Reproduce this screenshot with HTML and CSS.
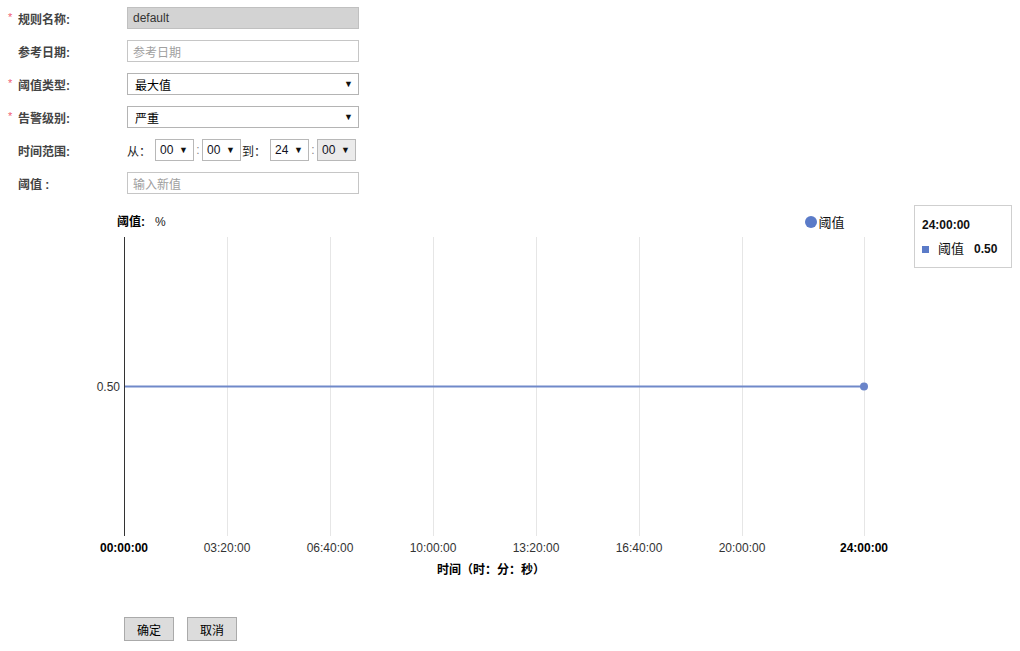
FILE: index.html
```html
<!DOCTYPE html>
<html lang="zh">
<head>
<meta charset="utf-8">
<title>规则</title>
<link rel="stylesheet" href="styles.css">
</head>
<body>
<form class="form">
  <div class="row">
    <label class="label"><span class="req">*</span>规则名称:</label>
    <div class="input disabled">default</div>
  </div>
  <div class="row">
    <label class="label"><span class="req"></span>参考日期:</label>
    <div class="input placeholder">参考日期</div>
  </div>
  <div class="row">
    <label class="label"><span class="req">*</span>阈值类型:</label>
    <div class="select"><span>最大值</span><span class="arrow">▼</span></div>
  </div>
  <div class="row">
    <label class="label"><span class="req">*</span>告警级别:</label>
    <div class="select"><span>严重</span><span class="arrow">▼</span></div>
  </div>
  <div class="row">
    <label class="label"><span class="req"></span>时间范围:</label>
    <div class="time">
      <span class="tword">从：</span>
      <div class="tsel"><span>00</span><span class="arrow">▼</span></div>
      <span class="tcolon">:</span>
      <div class="tsel"><span>00</span><span class="arrow">▼</span></div>
      <span class="tword to">到：</span>
      <div class="tsel"><span>24</span><span class="arrow">▼</span></div>
      <span class="tcolon">:</span>
      <div class="tsel off"><span>00</span><span class="arrow">▼</span></div>
    </div>
  </div>
  <div class="row">
    <label class="label"><span class="req"></span>阈值 :</label>
    <div class="input placeholder">输入新值</div>
  </div>
</form>

<div class="chart">
  <svg class="plot" width="900" height="400" viewBox="0 0 900 400">
    <text x="117" y="32" class="ytitle"><tspan class="b">阈值:</tspan><tspan x="155">%</tspan></text>
    <circle cx="811" cy="28" r="6" fill="#5b7bc8"/>
    <text x="818.5" y="32.5" class="legend">阈值</text>
    <g stroke="#e6e6e6" stroke-width="1">
      <line x1="227.5" y1="43" x2="227.5" y2="342"/>
      <line x1="330.5" y1="43" x2="330.5" y2="342"/>
      <line x1="433.5" y1="43" x2="433.5" y2="342"/>
      <line x1="536.5" y1="43" x2="536.5" y2="342"/>
      <line x1="639.5" y1="43" x2="639.5" y2="342"/>
      <line x1="742.5" y1="43" x2="742.5" y2="342"/>
      <line x1="864.5" y1="43" x2="864.5" y2="342"/>
    </g>
    <line x1="124.5" y1="43" x2="124.5" y2="342" stroke="#333" stroke-width="1"/>
    <text x="120" y="196.5" class="ylab">0.50</text>
    <line x1="125" y1="192.5" x2="864" y2="192.5" stroke="#7089c9" stroke-width="2"/>
    <circle cx="864" cy="192.5" r="4" fill="#6a84c9"/>
    <g class="xlab">
      <text x="124" y="358" class="b">00:00:00</text>
      <text x="227" y="358">03:20:00</text>
      <text x="330" y="358">06:40:00</text>
      <text x="433" y="358">10:00:00</text>
      <text x="536" y="358">13:20:00</text>
      <text x="639" y="358">16:40:00</text>
      <text x="742" y="358">20:00:00</text>
      <text x="864" y="358" class="b">24:00:00</text>
    </g>
    <text x="491" y="380" class="xtitle">时间（时：分：秒）</text>
  </svg>
  <div class="tip">
    <div class="tip-time">24:00:00</div>
    <div class="tip-row"><span class="sq"></span><span class="tip-name">阈值</span><span class="tip-val">0.50</span></div>
  </div>
</div>

<div class="buttons">
  <button type="button" class="btn">确定</button>
  <button type="button" class="btn">取消</button>
</div>
</body>
</html>
```

FILE: styles.css
```css
html, body {
  margin: 0;
  padding: 0;
  background: #fff;
}
body {
  font-family: "Liberation Sans", Arial, "Noto Sans CJK SC", sans-serif;
  font-size: 12px;
  color: #333;
  width: 1020px;
}
.form {
  padding-top: 7px;
}
.row {
  display: flex;
  align-items: center;
  height: 22px;
  margin-bottom: 11px;
}
.row:last-child {
  margin-bottom: 0;
}
.label {
  display: flex;
  align-items: center;
  width: 127px;
  padding-left: 8px;
  box-sizing: border-box;
  font-weight: bold;
  color: #444;
}
.req {
  display: inline-block;
  width: 10px;
  color: #ef5d73;
  font-weight: normal;
  font-size: 11px;
  position: relative;
  top: -1px;
}
.input, .select {
  box-sizing: border-box;
  width: 232px;
  height: 22px;
  border: 1px solid #c6c6c6;
  background: #fff;
  display: flex;
  align-items: center;
  padding-left: 5px;
  color: #333;
}
.input.disabled {
  background: #d3d3d3;
  border-color: #c0c0c0;
}
.input.placeholder {
  color: #a0a0a0;
}
.select {
  justify-content: space-between;
  padding-left: 7px;
  padding-right: 5px;
  color: #000;
  border-color: #b4b4b4;
}
.arrow {
  font-size: 9px;
  color: #111;
}
.time {
  display: flex;
  align-items: center;
}
.tword {
  color: #222;
  margin-right: 4px;
}
.tword.to {
  margin-left: 1px;
  margin-right: 4px;
}
.tcolon {
  width: 8px;
  text-align: center;
  color: #888;
}
.tsel {
  box-sizing: border-box;
  width: 39px;
  height: 22px;
  border: 1px solid #b8b8b8;
  background: #fff;
  display: flex;
  align-items: center;
  justify-content: space-between;
  padding: 0 5px 0 4px;
  color: #112;
}
.tsel.off {
  background: #ebebeb;
}
.chart {
  position: relative;
  height: 400px;
}
.plot {
  display: block;
  font-family: "Liberation Sans", Arial, "Noto Sans CJK SC", sans-serif;
  font-size: 12px;
}
.plot .b {
  font-weight: bold;
  fill: #000;
}
.ytitle {
  fill: #222;
}
.legend {
  fill: #111;
  font-size: 13px;
}
.ylab {
  text-anchor: end;
  fill: #333;
}
.xlab text {
  text-anchor: middle;
  fill: #333;
}
.xtitle {
  text-anchor: middle;
  font-weight: bold;
  fill: #000;
}
.tip {
  position: absolute;
  left: 914px;
  top: 11px;
  width: 98px;
  height: 63px;
  box-sizing: border-box;
  border: 1px solid #cfcfcf;
  background: #fff;
  padding: 12px 0 0 7px;
}
.tip-time {
  font-weight: bold;
  color: #111;
  line-height: 14px;
}
.tip-row {
  display: flex;
  align-items: center;
  margin-top: 10px;
  line-height: 14px;
}
.sq {
  width: 7px;
  height: 7px;
  background: #5b7bc8;
  margin-right: 9px;
}
.tip-name {
  color: #111;
  font-size: 13px;
  margin-right: 10px;
}
.tip-val {
  font-weight: bold;
  color: #111;
}
.buttons {
  display: flex;
  gap: 13px;
  padding-left: 124px;
  margin-top: 23px;
}
.btn {
  box-sizing: border-box;
  width: 50px;
  height: 24px;
  border: 1px solid #aaa;
  background: #dcdcdc;
  font-family: "Liberation Sans", Arial, "Noto Sans CJK SC", sans-serif;
  font-size: 12px;
  color: #000;
  padding: 0;
  border-radius: 0;
}
```
